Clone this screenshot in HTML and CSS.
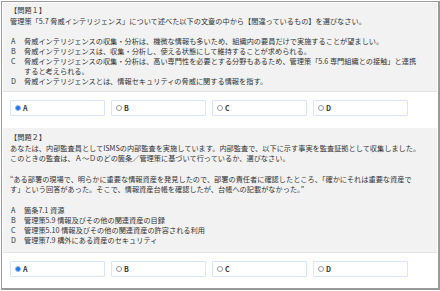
FILE: index.html
```html
<!DOCTYPE html>
<html lang="ja">
<head>
    <meta charset="UTF-8">
    <title>問題</title>
    <link rel="stylesheet" href="styles.css">
</head>
<body>
    <div class="sheet">
        <section class="question">
            <div class="q-body q1">
                <p class="q-title">【問題１】</p>
                <p class="q-text">管理策「5.7 脅威インテリジェンス」について述べた以下の文章の中から【間違っているもの】を選びなさい。</p>
                <ul class="choices">
                    <li><span class="key">A</span><span>脅威インテリジェンスの収集・分析は、機微な情報も多いため、組織内の要員だけで実施することが望ましい。</span></li>
                    <li><span class="key">B</span><span>脅威インテリジェンスは、収集・分析し、使える状態にして維持することが求められる。</span></li>
                    <li><span class="key">C</span><span>脅威インテリジェンスの収集・分析は、高い専門性を必要とする分野もあるため、管理策「5.6 専門組織との接触」と連携<br>すると考えられる。</span></li>
                    <li><span class="key">D</span><span>脅威インテリジェンスとは、情報セキュリティの脅威に関する情報を指す。</span></li>
                </ul>
            </div>
            <div class="answers">
                <label class="answer"><span class="radio checked"></span>A</label>
                <label class="answer"><span class="radio"></span>B</label>
                <label class="answer"><span class="radio"></span>C</label>
                <label class="answer"><span class="radio"></span>D</label>
            </div>
        </section>

        <section class="question">
            <div class="q-body q2">
                <p class="q-title">【問題２】</p>
                <p class="q-text">あなたは、内部監査員としてISMSの内部監査を実施しています。内部監査で、以下に示す事実を監査証拠として収集しました。<br>このときの監査は、Ａ～Ｄのどの箇条／管理策に基づいて行っているか、選びなさい。</p>
                <p class="q-text">“ある部署の現場で、明らかに重要な情報資産を発見したので、部署の責任者に確認したところ、「確かにそれは重要な資産で<br>す」という回答があった。そこで、情報資産台帳を確認したが、台帳への記載がなかった。”</p>
                <ul class="choices">
                    <li><span class="key">A</span><span>箇条7.1 資源</span></li>
                    <li><span class="key">B</span><span>管理策5.9 情報及びその他の関連資産の目録</span></li>
                    <li><span class="key">C</span><span>管理策5.10 情報及びその他の関連資産の許容される利用</span></li>
                    <li><span class="key">D</span><span>管理策7.9 構外にある資産のセキュリティ</span></li>
                </ul>
            </div>
            <div class="answers last">
                <label class="answer"><span class="radio checked"></span>A</label>
                <label class="answer"><span class="radio"></span>B</label>
                <label class="answer"><span class="radio"></span>C</label>
                <label class="answer"><span class="radio"></span>D</label>
            </div>
        </section>
    </div>
</body>
</html>
```

FILE: styles.css
```css
body {
    margin: 0;
    background: #fff;
    font-family: "Noto Sans CJK JP", "Noto Sans", sans-serif;
    font-size: 7.2px;
    line-height: 10px;
    color: #333;
}
.sheet {
    margin: 1px 0 0 1px;
    width: 434px;
    padding: 1px;
    border: 1px solid #9a9a9a;
    border-right-width: 2px;
    border-bottom-width: 2px;
    background: #fff;
}
p {
    margin: 0;
}
.q-body {
    background: #f2f2f2;
    border-bottom: 1px solid #e4e4e4;
    padding: 2px 7px 5px;
    white-space: nowrap;
}
.q1 .q-title {
    margin-bottom: 1px;
}
.q2 {
    padding-top: 4px;
    padding-bottom: 7px;
}
.q2 .q-title {
    margin-bottom: 1px;
}
.q-text {
    margin-bottom: 10px;
}
.q2 .q-text {
    margin-bottom: 11px;
}
.choices {
    list-style: none;
    margin: 0;
    padding: 0;
}
.choices li {
    display: flex;
}
.key {
    width: 13px;
    flex: none;
    padding-left: 1px;
}
.answers {
    display: flex;
    gap: 6px;
    padding: 8px 7px 12px;
}
.answers.last {
    padding-bottom: 10px;
}
.answer {
    width: 89px;
    height: 14px;
    border: 1.5px solid #d7e6fa;
    border-radius: 1px;
    display: flex;
    align-items: center;
    gap: 2px;
    padding-left: 4px;
    font-weight: bold;
    font-size: 7px;
    color: #333;
}
.radio {
    width: 4px;
    height: 4px;
    border: 1px solid #9a9a9a;
    border-radius: 50%;
    background: #fff;
}
.radio.checked {
    background: #1a73e8;
    border-color: #8fb8f0;
}
```
